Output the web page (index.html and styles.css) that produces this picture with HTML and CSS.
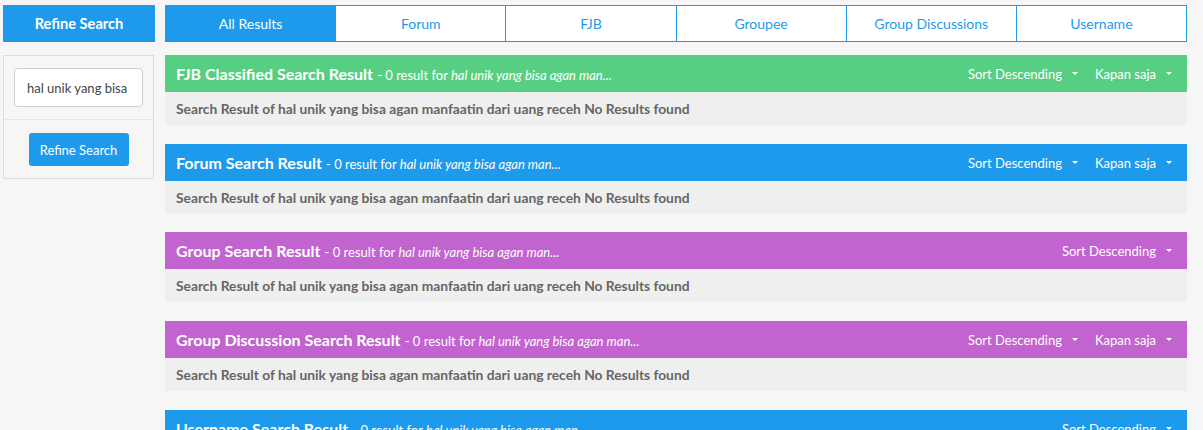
FILE: index.html
```html
<!DOCTYPE html>
<html>
<head>
<meta charset="utf-8">
<link rel="stylesheet" href="styles.css">
</head>
<body>
<div class="page">
  <aside class="sidebar">
    <div class="side-head">Refine Search</div>
    <div class="side-panel">
      <div class="side-input-wrap">
        <input class="side-input" type="text" value="hal unik yang bisa agan manfaatin dari uang receh">
      </div>
      <div class="side-btn-wrap">
        <button class="side-btn">Refine Search</button>
      </div>
    </div>
  </aside>
  <main class="main">
    <nav class="tabs">
      <a class="tab active">All Results</a>
      <a class="tab">Forum</a>
      <a class="tab">FJB</a>
      <a class="tab">Groupee</a>
      <a class="tab">Group Discussions</a>
      <a class="tab">Username</a>
    </nav>

    <section class="result">
      <div class="result-head green">
        <div class="title"><b>FJB Classified Search Result</b> <span class="sub">- 0 result for <i>hal unik yang bisa agan man...</i></span></div>
        <div class="controls"><span class="dd">Sort Descending <span class="caret"></span></span><span class="dd">Kapan saja <span class="caret"></span></span></div>
      </div>
      <div class="result-body">Search Result of hal unik yang bisa agan manfaatin dari uang receh No Results found</div>
    </section>

    <section class="result">
      <div class="result-head blue">
        <div class="title"><b>Forum Search Result</b> <span class="sub">- 0 result for <i>hal unik yang bisa agan man...</i></span></div>
        <div class="controls"><span class="dd">Sort Descending <span class="caret"></span></span><span class="dd">Kapan saja <span class="caret"></span></span></div>
      </div>
      <div class="result-body">Search Result of hal unik yang bisa agan manfaatin dari uang receh No Results found</div>
    </section>

    <section class="result">
      <div class="result-head purple">
        <div class="title"><b>Group Search Result</b> <span class="sub">- 0 result for <i>hal unik yang bisa agan man...</i></span></div>
        <div class="controls"><span class="dd">Sort Descending <span class="caret"></span></span></div>
      </div>
      <div class="result-body">Search Result of hal unik yang bisa agan manfaatin dari uang receh No Results found</div>
    </section>

    <section class="result">
      <div class="result-head purple">
        <div class="title"><b>Group Discussion Search Result</b> <span class="sub">- 0 result for <i>hal unik yang bisa agan man...</i></span></div>
        <div class="controls"><span class="dd">Sort Descending <span class="caret"></span></span><span class="dd">Kapan saja <span class="caret"></span></span></div>
      </div>
      <div class="result-body">Search Result of hal unik yang bisa agan manfaatin dari uang receh No Results found</div>
    </section>

    <section class="result">
      <div class="result-head blue">
        <div class="title"><b>Username Search Result</b> <span class="sub">- 0 result for <i>hal unik yang bisa agan man...</i></span></div>
        <div class="controls"><span class="dd">Sort Descending <span class="caret"></span></span></div>
      </div>
      <div class="result-body">Search Result of hal unik yang bisa agan manfaatin dari uang receh No Results found</div>
    </section>
  </main>
</div>
</body>
</html>
```
FILE: styles.css
```css
* { box-sizing: border-box; }
html, body { margin: 0; padding: 0; }
body {
  background: #f6f6f6;
  font-family: "Lato", "Open Sans", sans-serif;
  color: #666;
  overflow: hidden;
}
.page {
  display: flex;
  gap: 10px;
  padding: 5px 0 0 3px;
}
.sidebar {
  width: 152px;
  flex: none;
}
.side-head {
  height: 37px;
  background: #1e9aec;
  color: #fff;
  font-weight: bold;
  font-size: 14.6px;
  display: flex;
  align-items: center;
  justify-content: center;
}
.side-panel {
  margin-top: 13px;
  border: 1px solid #dcdcdc;
  background: #f6f6f6;
  width: 151px;
}
.side-input-wrap {
  padding: 12px 10px 12px 10px;
  border-bottom: 1px solid #e6e6e6;
}
.side-input {
  width: 129px;
  height: 39px;
  border: 1px solid #cfcfcf;
  border-radius: 4px;
  background: #fff;
  padding: 0 12px;
  font-family: inherit;
  font-size: 13px;
  color: #444;
  outline: none;
}
.side-btn-wrap {
  padding: 13px 0 12px 0;
  display: flex;
  justify-content: center;
}
.side-btn {
  width: 100px;
  height: 33px;
  border: none;
  border-radius: 3px;
  background: #1e9aec;
  color: #fff;
  font-family: inherit;
  font-size: 13px;
  padding: 0;
}
.main {
  width: 1022px;
  flex: none;
}
.tabs {
  display: flex;
  height: 37px;
  border: 1px solid #1e9aec;
  background: #fff;
}
.tab {
  flex: 1;
  display: flex;
  align-items: center;
  justify-content: center;
  color: #1e9aec;
  font-size: 14px;
  border-left: 1px solid #1e9aec;
}
.tab:first-child { border-left: none; }
.tab.active { background: #1e9aec; color: #fff; }
.result { margin-top: 13px; }
.result + .result { margin-top: 19px; }
.result:nth-of-type(3) { margin-top: 18px; }
.result-head {
  height: 37px;
  display: flex;
  align-items: center;
  justify-content: space-between;
  padding: 0 15px 0 11px;
  color: #fff;
}
.green { background: #57cf83; }
.blue { background: #1e9aec; }
.purple { background: #c264cf; }
.title b { font-size: 16px; font-weight: bold; }
.sub { font-size: 13px; }
.controls { display: flex; gap: 17px; font-size: 13px; }
.dd { display: inline-flex; align-items: center; gap: 8px; }
.caret {
  display: inline-block;
  width: 0; height: 0;
  border-left: 3px solid transparent;
  border-right: 3px solid transparent;
  border-top: 3px solid #fff;
  margin-left: 2px;
}
.result-body {
  height: 33px;
  background: #efefef;
  padding: 0 11px;
  display: flex;
  align-items: center;
  font-size: 13.8px;
  font-weight: bold;
  color: #666;
}
```
